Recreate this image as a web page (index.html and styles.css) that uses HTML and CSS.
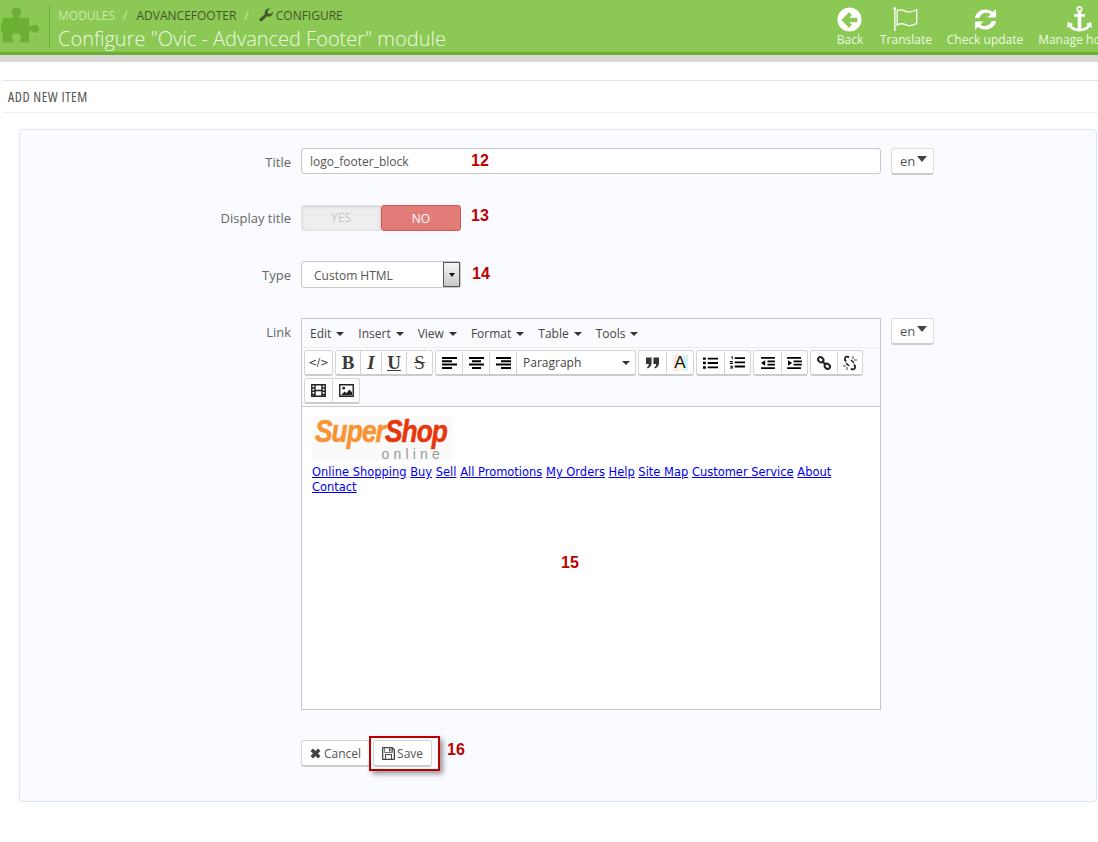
FILE: index.html
```html
<!DOCTYPE html>
<html>
<head lang="en">
    <meta charset="UTF-8">
    <title>Configure module</title>
    <link rel="stylesheet" href="styles.css">
</head>
<body>
<div class="head">
    <div class="head-icon">
        <svg width="40" height="40" viewBox="0 0 44 44"><path fill="#6cb033" d="M2 15h10c2 0 2-1 1-3-2-2-2-7 4-8 6 0 7 5 4 8-1 2-1 3 1 3h9v8c0 2 2 2 3 1 3-2 8-1 8 3 0 5-5 5-8 3-1-1-3-1-3 1v11h-9c-2 0-2-2-1-3 2-3 1-7-4-7s-6 4-4 7c1 1 1 3-1 3H2V32c0-2-1-2-2-1v-9c1-1 2-1 2-3z" transform="translate(1 -2)"/></svg>
    </div>
    <div class="head-text">
        <div class="crumbs">
            <span class="crumb-light">MODULES</span><span class="crumb-sep">/</span><span>ADVANCEFOOTER</span><span class="crumb-sep">/</span>
            <svg class="wrench" width="14" height="14" viewBox="0 0 14 14"><path fill="#44562f" d="M1 13c-1-1-1-2 0-2.600L6 6C5 3 7 0 11 .5L8.500 3l.5 2.500 2.500.5L14 3.500C14.300 7 11 9.500 8 8.300l-5 4.700c-.6.600-1.400.600-2 0z"/></svg>
            <span>CONFIGURE</span>
        </div>
        <h2 class="page-title">Configure "Ovic - Advanced Footer" module</h2>
    </div>
    <div class="head-tools">
        <div class="tool tool-back">
            <svg width="25" height="25" viewBox="0 0 26 26"><circle cx="13" cy="13" r="12.500" fill="#fff"/><path fill="#8bc954" d="M12.500 5.500l3 3-2.800 2.700H21v4.600h-8.300l2.800 2.700-3 3L5 14v-1z"/></svg>
            <span>Back</span>
        </div>
        <div class="tool tool-flag">
            <svg width="28" height="26" viewBox="0 0 28 28"><circle cx="2" cy="3" r="1.600" fill="#fff"/><path fill="none" stroke="#fff" stroke-width="1.500" d="M2 3v24"/><path fill="none" stroke="#fff" stroke-width="1.400" d="M4.500 5c4-2.500 7 0 10 1s7 0 11-2v15c-4 2-8 3-11 1.500s-6-2.500-10 0z"/></svg>
            <span>Translate</span>
        </div>
        <div class="tool tool-update">
            <svg width="25" height="25" viewBox="0 0 26 26"><path fill="#fff" d="M24 2v9h-9l3.300-3.300C15.500 5.200 10 5.500 7.500 9.500c-.4.600-.7 1.300-.9 2H1.800C3.500 3.500 13.500-.5 20.700 5.300zM2 24v-9h9l-3.300 3.300c2.800 2.500 8.300 2.200 10.800-1.800.4-.6.7-1.300.9-2h4.800c-1.700 8-11.700 12-18.900 6.200z"/></svg>
            <span>Check update</span>
        </div>
        <div class="tool tool-hook">
            <svg width="29" height="27" viewBox="0 0 30 30"><path fill="#fff" d="M15 1a3.500 3.500 0 0 1 2 6.400V10h4v3h-4v13c3.500-.4 6-1.800 7-3.700l-2-1.300 6-2.500.7 7-2-1.200C24.500 27.500 20 29.500 15 29.500S5.500 27.500 3.300 24.300l-2 1.200L2 18.500 8 21l-2 1.300c1 1.900 3.500 3.300 7 3.700V13H9v-3h4V7.400A3.500 3.500 0 0 1 15 1zm0 2a1.500 1.500 0 1 0 0 3 1.500 1.500 0 0 0 0-3z"/></svg>
            <span>Manage hooks</span>
        </div>
    </div>
</div>
<div class="subbar"></div>

<div class="panel">
    <div class="panel-heading">ADD NEW ITEM</div>
    <div class="well">
        <div class="form-row row-title">
            <label class="label">Title</label>
            <div class="field"><div class="input">logo_footer_block</div></div>
            <div class="lang"><div class="btn-lang">en<i class="caret-lang"></i></div></div>
        </div>
        <div class="form-row row-switch">
            <label class="label">Display title</label>
            <div class="switch"><span class="sw-yes">YES</span><span class="sw-no">NO</span></div>
        </div>
        <div class="form-row row-type">
            <label class="label">Type</label>
            <div class="select"><span>Custom HTML</span><span class="select-arrow"><i></i></span></div>
        </div>
        <div class="form-row row-link">
            <label class="label">Link</label>
            <div class="field">
                <div class="editor">
                    <div class="menubar">
                        <span>Edit<i class="caret"></i></span>
                        <span>Insert<i class="caret"></i></span>
                        <span>View<i class="caret"></i></span>
                        <span>Format<i class="caret"></i></span>
                        <span>Table<i class="caret"></i></span>
                        <span>Tools<i class="caret"></i></span>
                    </div>
                    <div class="toolbar">
                        <div class="group">
                            <span class="tb tb-code">&lt;/&gt;</span>
                        </div>
                        <div class="group">
                            <span class="tb tb-serif tb-b">B</span>
                            <span class="tb tb-serif tb-i">I</span>
                            <span class="tb tb-serif tb-u">U</span>
                            <span class="tb tb-serif tb-s">S</span>
                        </div>
                        <div class="group">
                            <span class="tb tb-n"><svg width="15" height="12" viewBox="0 0 15 12"><path d="M0 0h15v2H0zM0 3.300h10v2H0zM0 6.600h15v2H0zM0 10h10v2H0z"/></svg></span>
                            <span class="tb"><svg width="15" height="12" viewBox="0 0 15 12"><path d="M0 0h15v2H0zM3 3.300h9v2H3zM0 6.600h15v2H0zM3 10h9v2H3z"/></svg></span>
                            <span class="tb"><svg width="15" height="12" viewBox="0 0 15 12"><path d="M0 0h15v2H0zM5 3.300h10v2H5zM0 6.600h15v2H0zM5 10h10v2H5z"/></svg></span>
                            <span class="tb-format">Paragraph<i class="caret"></i></span>
                        </div>
                        <div class="group">
                            <span class="tb"><svg width="13" height="12" viewBox="0 0 14 12"><path fill="#333" d="M0 0h6v6c0 3-2 5-4.500 6L1 10.500C2 10 3 9 3 7H0zM8 0h6v6c0 3-2 5-4.500 6L9 10.500c1-.5 2-1.500 2-3.500H8z"/></svg></span>
                            <span class="tb tb-color">A</span>
                        </div>
                        <div class="group">
                            <span class="tb"><svg width="15" height="12" viewBox="0 0 16 12"><path d="M0 0h3v2.500H0zM0 4.700h3v2.500H0zM0 9.500h3V12H0zM5 .3h11v2H5zM5 5h11v2H5zM5 9.700h11v2H5z"/></svg></span>
                            <span class="tb tb-n"><svg width="15" height="13" viewBox="0 0 16 13"><path d="M1 0h2v3H2V1H1zM0 5h3v1L1 7h2v1H0V7l2-1H0zM0 10h3v3H0v-1h2v-.3H1v-.7h1v-.3H0zM5 .8h11v2H5zM5 5.300h11v2H5zM5 9.800h11v2H5z"/></svg></span>
                        </div>
                        <div class="group">
                            <span class="tb"><svg width="15" height="12" viewBox="0 0 16 13"><path d="M1 0h15v2H1zM8 3.700h8v2H8zM8 7.300h8v2H8zM1 11h15v2H1zM5.500 3.500v6L1 6.500z"/></svg></span>
                            <span class="tb tb-n"><svg width="15" height="12" viewBox="0 0 16 13"><path d="M0 0h15v2H0zM7 3.700h9v2H7zM7 7.300h9v2H7zM0 11h15v2H0zM1 3.500v6l4.500-3z"/></svg></span>
                        </div>
                        <div class="group">
                            <span class="tb tb-n"><svg width="14" height="14" viewBox="0 0 15 15"><g fill="none" stroke="#222" stroke-width="2.200"><rect x="1" y="1.500" width="6" height="5" rx="2.500" transform="rotate(40 4 4)"/><rect x="8" y="8.500" width="6" height="5" rx="2.500" transform="rotate(40 11 11)"/><path d="M6 6l3 3"/></g></svg></span>
                            <span class="tb tb-link"><svg width="16" height="16" viewBox="0 0 16 16"><g fill="none" stroke="#222" stroke-width="1.800"><path d="M7 2.500C5.500 1 3.500 1.500 3 3s0 2.500 1 3.500"/><path d="M9 13.500c1.500 1.500 3.500 1 4-.5s0-2.500-1-3.500"/><path d="M4 8l3 3M9 5l3 3" stroke-width="1.500"/></g><path stroke="#444" d="M11 1v3M15 5h-3M1 11h3M5 15v-3" fill="none"/></svg></span>
                        </div>
                        <div class="group">
                            <span class="tb"><svg width="15" height="13" viewBox="0 0 16 14"><path fill="#222" fill-rule="evenodd" d="M0 0h16v14H0zM1.500 1.500v2h2v-2zM5 1.500v4.700h6V1.500zM12.500 1.500v2h2v-2zM1.500 5v2h2V5zM12.500 5v2h2V5zM1.500 8.500v2h2v-2zM5 7.800v4.700h6V7.800zM12.500 8.500v2h2v-2zM1.500 12v.5h2V12zM12.500 12v.5h2V12z"/></svg></span>
                            <span class="tb"><svg width="15" height="13" viewBox="0 0 16 14"><path fill="#222" fill-rule="evenodd" d="M0 0h16v14H0zM1.500 1.500v11h13v-11z"/><circle cx="5" cy="4.500" r="1.500" fill="#222"/><path fill="#222" d="M2 12l4-4 2 2 3-4 3 3v3z"/></svg></span>
                        </div>
                    </div>
                    <div class="edit-area">
                        <div class="logo">
                            <div class="logo-word"><span class="logo-super">Super</span><span class="logo-shop">Shop</span></div>
                            <div class="logo-online">online</div>
                        </div>
                        <div class="edit-links">
                            <a href="#">Online Shopping</a> <a href="#">Buy</a> <a href="#">Sell</a> <a href="#">All Promotions</a> <a href="#">My Orders</a> <a href="#">Help</a> <a href="#">Site Map</a> <a href="#">Customer Service</a> <a href="#">About</a> <a href="#">Contact</a>
                        </div>
                    </div>
                </div>
            </div>
            <div class="lang"><div class="btn-lang">en<i class="caret-lang"></i></div></div>
        </div>
        <div class="form-row row-buttons">
            <div class="label"></div>
            <div class="buttons">
                <span class="btn"><svg width="11" height="11" viewBox="0 0 11 11"><path fill="#444" d="M3 .5l2.500 2.500L8 .5 10.500 3 8 5.500 10.500 8 8 10.500 5.500 8 3 10.500.5 8 3 5.500.5 3z"/></svg>Cancel</span>
                <span class="btn btn-save"><svg width="13" height="13" viewBox="0 0 13 13"><path fill="#444" fill-rule="evenodd" d="M1 0h9.500L13 2.500V12a1 1 0 0 1-1 1H1a1 1 0 0 1-1-1V1a1 1 0 0 1 1-1zM3 1.300v3.700h6.500V1.300zM7 1.800h1.500v2.600H7zM1.300 1.300v10.400H3V7h7v4.700h1.700V3L10.800 1.900v3.800H2.300V1.300zM4 8v3.700h5V8z"/></svg>Save</span>
            </div>
        </div>

        <span class="note note-12">12</span>
        <span class="note note-13">13</span>
        <span class="note note-14">14</span>
        <span class="note note-15">15</span>
        <span class="note note-16">16</span>
        <div class="save-mark"></div>
    </div>
</div>
</body>
</html>
```

FILE: styles.css
```css
body, h2, div {
    margin: 0;
    padding: 0;
}
html, body {
    height: 842px;
    overflow: hidden;
}
body {
    background: #fff;
    font-family: "Open Sans", "Noto Sans", sans-serif;
    font-size: 12px;
    color: #555;
}
.head {
    height: 52px;
    background: #8bc954;
    border-bottom: 3px solid #6cb033;
    display: flex;
    overflow: hidden;
    position: relative;
}
.head-icon {
    width: 50px;
    height: 42px;
    margin-top: 6px;
    border-right: 1px solid #6cb033;
    box-sizing: border-box;
    overflow: hidden;
}
.head-text {
    margin-left: 8px;
    flex: 1;
}
.crumbs {
    display: flex;
    align-items: center;
    height: 14px;
    margin-top: 8px;
    font-size: 12px;
    color: #44562f;
}
.crumb-light {
    color: #c9ecab;
}
.crumb-sep {
    margin: 0 9px 0 8px;
    color: #c9ecab;
}
.wrench {
    margin: 0 3px 0 1px;
}
.page-title {
    margin-top: 4px;
    font-size: 20px;
    font-weight: 300;
    line-height: 26px;
    color: #eef9e4;
    white-space: nowrap;
}
.head-tools {
    position: absolute;
    left: 837px;
    top: 0;
    width: 300px;
    display: flex;
}
.tool {
    display: flex;
    flex-direction: column;
    align-items: center;
    justify-content: flex-end;
    height: 48px;
    color: #eef9e4;
    font-size: 12px;
    line-height: 16px;
    white-space: nowrap;
}
.tool svg {
    flex: none;
}
.tool-back {
    width: 26px;
}
.tool-back svg {
    margin-right: 2px;
}
.tool-flag {
    width: 52px;
    margin-left: 17px;
}
.tool-update {
    width: 76px;
    margin-left: 15px;
}
.tool-hook {
    width: 84px;
    margin-left: 14px;
}
.subbar {
    height: 7px;
    background: #d7d7d7;
}
.panel {
    margin-top: 18px;
    border-top: 1px solid #e6e6e6;
    border-top-left-radius: 4px;
}
.panel-heading {
    height: 31px;
    margin-left: 3px;
    border-bottom: 1px solid #eee;
    padding-left: 5px;
    font-size: 14px;
    font-stretch: condensed;
    font-weight: 500;
    letter-spacing: .55px;
    line-height: 32px;
    color: #555;
}
.well {
    position: relative;
    margin: 16px 1px 0 19px;
    height: 673px;
    box-sizing: border-box;
    background: #f9fbff;
    border: 1px solid #dbe6f5;
    border-radius: 4px;
    padding-top: 18px;
}
.form-row {
    display: flex;
    align-items: flex-start;
}
.label {
    width: 271px;
    flex: none;
    text-align: right;
    font-size: 13px;
    line-height: 28px;
    color: #666;
}
.row-switch {
    margin-top: 29px;
}
.row-switch .label {
    line-height: 27px;
}
.row-type {
    margin-top: 29px;
}
.row-link {
    margin-top: 29px;
}
.row-buttons {
    margin-top: 30px;
}
.field {
    width: 580px;
    margin-left: 10px;
    flex: none;
}
.input {
    height: 26px;
    box-sizing: border-box;
    background: #fff;
    border: 1px solid #c7c7c7;
    border-radius: 3px;
    padding-left: 8px;
    font-size: 12px;
    line-height: 25px;
    color: #555;
}
.lang {
    margin-left: 10px;
}
.btn-lang {
    width: 43px;
    height: 27px;
    box-sizing: border-box;
    background: #fff;
    border: 1px solid #ddd;
    border-bottom: 2px solid #ccc;
    border-radius: 3px;
    padding-left: 8px;
    font-size: 13px;
    line-height: 24px;
    color: #555;
    display: flex;
    align-items: center;
}
.caret-lang {
    width: 0;
    height: 0;
    margin-left: 2px;
    margin-top: -4px;
    border-left: 5px solid transparent;
    border-right: 5px solid transparent;
    border-top: 6px solid #444;
}
.switch {
    display: flex;
    width: 160px;
    height: 26px;
    margin-left: 10px;
    font-size: 12px;
    line-height: 26px;
    text-align: center;
}
.sw-yes {
    width: 80px;
    box-sizing: border-box;
    background: #eee;
    border: 1px solid #e2e2e2;
    border-radius: 3px 0 0 3px;
    box-shadow: inset 0 1px 3px rgba(0, 0, 0, .12);
    color: #c4c4c4;
    line-height: 24px;
}
.sw-no {
    width: 80px;
    box-sizing: border-box;
    background: #e27c79;
    border: 1px solid #d9534f;
    border-radius: 3px;
    color: #fff;
    line-height: 26px;
}
.select {
    width: 160px;
    height: 27px;
    margin-left: 10px;
    box-sizing: border-box;
    background: #fff;
    border: 1px solid #c7c7c7;
    border-radius: 3px;
    padding-left: 12px;
    font-size: 12px;
    line-height: 27px;
    color: #555;
    display: flex;
    justify-content: space-between;
}
.select-arrow {
    width: 17px;
    height: 25px;
    box-sizing: border-box;
    border: 1px solid #555;
    background: linear-gradient(#f6f6f6, #c8c8c8);
    display: flex;
    align-items: center;
    justify-content: center;
}
.select-arrow i {
    border-left: 3.500px solid transparent;
    border-right: 3.500px solid transparent;
    border-top: 4px solid #111;
}
.editor {
    height: 392px;
    box-sizing: border-box;
    border: 1px solid #c7c7c7;
    display: flex;
    flex-direction: column;
}
.menubar {
    height: 28px;
    flex: none;
    display: flex;
    align-items: center;
    gap: 14px;
    padding-left: 8px;
    border-bottom: 1px solid #eee;
    font-size: 12px;
    color: #444;
}
.caret {
    display: inline-block;
    margin-left: 5px;
    vertical-align: 2px;
    border-left: 4px solid transparent;
    border-right: 4px solid transparent;
    border-top: 4px solid #333;
}
.toolbar {
    height: 59px;
    flex: none;
    box-sizing: border-box;
    display: flex;
    flex-wrap: wrap;
    gap: 2px;
    align-content: flex-start;
    padding: 2px 2px 0;
    border-bottom: 1px solid #c7c7c7;
}
.group {
    display: flex;
    height: 26px;
    box-sizing: border-box;
    background: #fff;
    border: 1px solid #d5d5d5;
    border-bottom: 2px solid #ccc;
    border-radius: 3px;
}
.tb {
    width: 27px;
    flex: none;
    box-sizing: border-box;
    display: flex;
    align-items: center;
    justify-content: center;
    border-left: 1px solid #d5d5d5;
    color: #333;
}
.tb:first-child {
    border-left: 0;
}
.tb svg {
    flex: none;
}
.tb-n {
    width: 26px;
}
.tb-link {
    width: 25px;
}
.tb-code {
    font-family: "DejaVu Sans", sans-serif;
    font-size: 10px;
}
.tb-serif {
    font-family: "Liberation Serif", serif;
    font-size: 19px;
    font-weight: 700;
    color: #3a3a3a;
}
.tb-b {
    width: 24px;
}
.tb-i {
    width: 21px;
    font-style: italic;
}
.tb-u {
    width: 25px;
    text-decoration: underline;
}
.tb-s {
    width: 26px;
    text-decoration: line-through;
    font-weight: 400;
}
.tb-color {
    font-family: "Liberation Sans", sans-serif;
    font-size: 17px;
    color: #111;
    background: linear-gradient(90deg, #fde6ea 0 33%, #fdf7d8 33% 66%, #d8f0fa 66%) center / 15px 16px no-repeat;
}
.tb-format {
    width: 119px;
    box-sizing: border-box;
    border-left: 1px solid #d5d5d5;
    padding: 1px 5px 0 6px;
    display: flex;
    align-items: center;
    justify-content: space-between;
    font-size: 12px;
    line-height: 22px;
    color: #444;
}
.edit-area {
    flex: 1;
    background: #fff;
    padding: 9px 10px 0;
    font-family: "DejaVu Sans", sans-serif;
    font-size: 11.480px;
    line-height: 15px;
}
.edit-links a {
    color: #00e;
}
.logo {
    width: 141px;
    height: 45px;
    box-sizing: border-box;
    padding-top: 2px;
    margin-bottom: 4px;
    background: #fafafa;
}
.logo-word {
    width: 142px;
    height: 27px;
    margin-left: 3px;
    font-family: "Liberation Sans", sans-serif;
    font-size: 28px;
    font-weight: 700;
    font-style: italic;
    line-height: 27px;
    letter-spacing: -1px;
    white-space: nowrap;
    -webkit-text-stroke: .5px;
    transform: scale(.94, 1.15);
    transform-origin: left center;
}
.logo-super {
    color: #f79433;
}
.logo-shop {
    color: #e6360c;
}
.logo-online {
    margin-top: 2px;
    font-family: "Liberation Sans", sans-serif;
    font-size: 14px;
    line-height: 14px;
    letter-spacing: 4.200px;
    color: #999;
    text-align: right;
    padding-right: 9px;
}
.buttons {
    display: flex;
    margin-left: 10px;
}
.btn {
    height: 27px;
    box-sizing: border-box;
    background: #fff;
    border: 1px solid #d5d5d5;
    border-bottom: 2px solid #ccc;
    border-radius: 3px;
    padding: 0 8px;
    display: flex;
    align-items: center;
    gap: 3px;
    font-size: 12px;
    color: #555;
}
.btn-save {
    margin-left: 3px;
    gap: 2px;
}
.btn svg {
    flex: none;
}
.note {
    position: absolute;
    font-family: "Liberation Sans", sans-serif;
    font-size: 16px;
    font-weight: 700;
    line-height: 18px;
    color: #b00;
}
.note-12 {
    left: 451px;
    top: 22px;
}
.note-13 {
    left: 451px;
    top: 77px;
}
.note-14 {
    left: 452px;
    top: 135px;
}
.note-15 {
    left: 541px;
    top: 424px;
}
.note-16 {
    left: 427px;
    top: 611px;
}
.save-mark {
    position: absolute;
    left: 349px;
    top: 606px;
    width: 71px;
    height: 35px;
    box-sizing: border-box;
    border: 2px solid #b00;
    box-shadow: 3px 3px 5px rgba(0, 0, 0, .4);
}
```
